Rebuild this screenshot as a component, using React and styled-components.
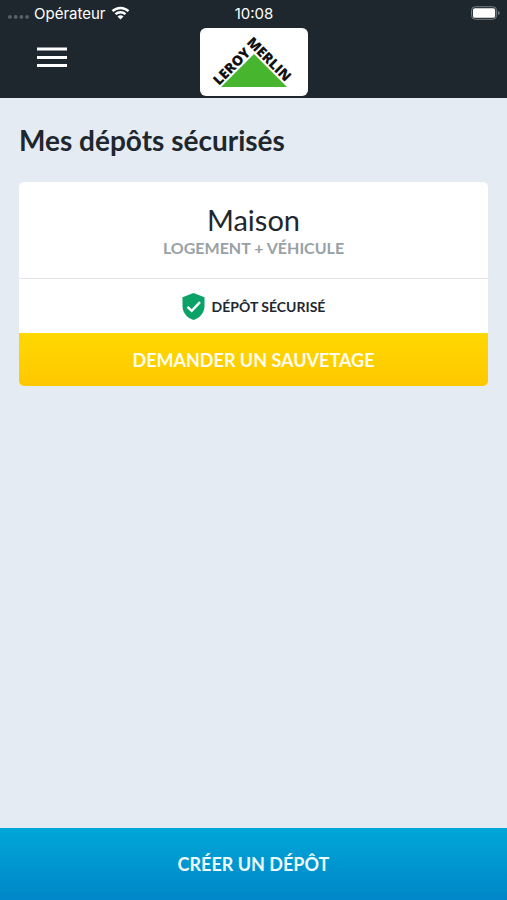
import styled, { createGlobalStyle } from "styled-components";

const darkColor = "#1e272e";
const pageColor = "#e5ebf3";

const App = () => {
  return (
    <Screen>
      <GlobalStyle />
      <Header>
        <StatusBar>
          <Carrier>
            <Dots viewBox="0 0 22 8" aria-hidden="true">
              <circle cx="2" cy="5" r="2" />
              <circle cx="8" cy="5" r="2" />
              <circle cx="14" cy="5" r="2" />
              <circle cx="20" cy="5" r="2" />
            </Dots>
            Opérateur
            <Wifi viewBox="0 0 18 14" aria-hidden="true">
              <path d="M1 5.2a11.6 11.6 0 0 1 16 0" />
              <path d="M4 8.2a7.4 7.4 0 0 1 10 0" />
              <path className="base" d="M9 13.6 6 10.6a4.3 4.3 0 0 1 6 0z" />
            </Wifi>
          </Carrier>
          <span>10:08</span>
          <Battery viewBox="0 0 30 14" aria-hidden="true">
            <rect x="0.5" y="0.5" width="26" height="13" rx="4" className="case" />
            <rect x="2" y="2" width="23" height="10" rx="2" fill="#fff" />
            <path d="M28 5v4c1-.3 1.6-1 1.6-2S29 5.300 28 5z" fill="#7b8287" />
          </Battery>
        </StatusBar>
        <NavBar>
          <MenuButton type="button" aria-label="Menu">
            <MenuIcon viewBox="0 0 30 21" aria-hidden="true">
              <path d="M0 2h30M0 10.500h30M0 18.600h30" />
            </MenuIcon>
          </MenuButton>
          <Logo viewBox="0 0 108 68" role="img" aria-label="Leroy Merlin">
            <path d="M54 26 87 59H21z" fill="#48b52e" />
            <text transform="translate(19 58) rotate(-45)">LEROY</text>
            <text transform="translate(46 15) rotate(45)">MERLIN</text>
          </Logo>
        </NavBar>
      </Header>

      <Main>
        <Title>Mes dépôts sécurisés</Title>
        <Card>
          <CardHead>
            <CardName>Maison</CardName>
            <CardType>LOGEMENT + VÉHICULE</CardType>
          </CardHead>
          <Status>
            <Shield viewBox="0 0 22 27" aria-hidden="true">
              <path
                d="M11 0 22 4.300V13c0 6.600-4.600 12-11 14C4.600 25 0 19.600 0 13V4.300z"
                fill="#0aa266"
              />
              <path
                d="m5 13.800 4.200 4.100 8.300-8.700"
                fill="none"
                stroke="#fff"
                strokeWidth="2.400"
              />
            </Shield>
            DÉPÔT SÉCURISÉ
          </Status>
          <RescueButton type="button">DEMANDER UN SAUVETAGE</RescueButton>
        </Card>
      </Main>

      <CreateButton type="button">CRÉER UN DÉPÔT</CreateButton>
    </Screen>
  );
};

export default App;

const GlobalStyle = createGlobalStyle`
  * {
    box-sizing: border-box;
  }

  body {
    margin: 0;
    background: ${pageColor};
    color: ${darkColor};
    font-family: Lato, "Liberation Sans", sans-serif;
  }

  button {
    border: none;
    padding: 0;
    font-family: inherit;
    cursor: pointer;
  }
`;

const Screen = styled.div`
  display: flex;
  flex-direction: column;
  min-height: 100vh;
`;

const Header = styled.header`
  background: ${darkColor};
  color: white;
`;

const StatusBar = styled.div`
  display: grid;
  grid-template-columns: 1fr auto 1fr;
  align-items: center;
  height: 26px;
  padding: 0 7px 0 8px;
  font-family: Inter, "Liberation Sans", sans-serif;
  font-size: 15px;
  font-weight: 400;
`;

const Carrier = styled.div`
  display: flex;
  align-items: center;
  gap: 5px;
`;

const Dots = styled.svg`
  width: 21px;
  height: 8px;
  margin-top: 6px;
  fill: #596168;
`;

const Wifi = styled.svg`
  width: 19px;
  height: 14px;
  fill: none;
  stroke: white;
  stroke-width: 2.4;

  .base {
    fill: white;
    stroke: none;
  }
`;

const Battery = styled.svg`
  width: 29px;
  height: 14px;
  justify-self: end;

  .case {
    fill: none;
    stroke: #7b8287;
  }
`;

const NavBar = styled.div`
  display: grid;
  grid-template-columns: 1fr auto 1fr;
  padding: 2px 0;
`;

const MenuButton = styled.button`
  display: flex;
  justify-self: start;
  align-self: start;
  margin-left: 29px;
  padding: 19px 8px;
  background: none;
`;

const MenuIcon = styled.svg`
  width: 30px;
  height: 21px;
  stroke: white;
  stroke-width: 3;
`;

const Logo = styled.svg`
  width: 108px;
  height: 68px;
  border-radius: 6px;
  background: white;

  text {
    fill: #111;
    font-family: "Open Sans", sans-serif;
    font-size: 14px;
    font-weight: 800;
  }
`;

const Main = styled.main`
  flex: 1;
  padding: 24px 19px;
`;

const Title = styled.h1`
  margin: 0 0 24px;
  font-size: 28px;
  font-weight: 700;
  line-height: 36px;
`;

const Card = styled.section`
  overflow: hidden;
  border-radius: 5px;
  background: white;
  text-align: center;
`;

const CardHead = styled.div`
  padding: 20px 16px;
  border-bottom: 1px solid #e3e6e9;
`;

const CardName = styled.h2`
  margin: 0;
  font-size: 29px;
  font-weight: 400;
  line-height: 36px;
`;

const CardType = styled.p`
  margin: 0;
  color: #98a1a6;
  font-size: 16px;
  font-weight: 700;
  line-height: 20px;
`;

const Status = styled.div`
  display: flex;
  align-items: center;
  justify-content: center;
  gap: 7px;
  height: 54px;
  font-size: 14px;
  font-weight: 700;
`;

const Shield = styled.svg`
  width: 23px;
  height: 27px;
`;

const RescueButton = styled.button`
  width: 100%;
  height: 53px;
  background: linear-gradient(#ffd800, #ffc800);
  color: #fffdf0;
  font-size: 18px;
  font-weight: 700;
`;

const CreateButton = styled.button`
  height: 72px;
  background: linear-gradient(#00a7d8, #0086c8);
  color: #effaff;
  font-size: 18px;
  font-weight: 700;
`;
